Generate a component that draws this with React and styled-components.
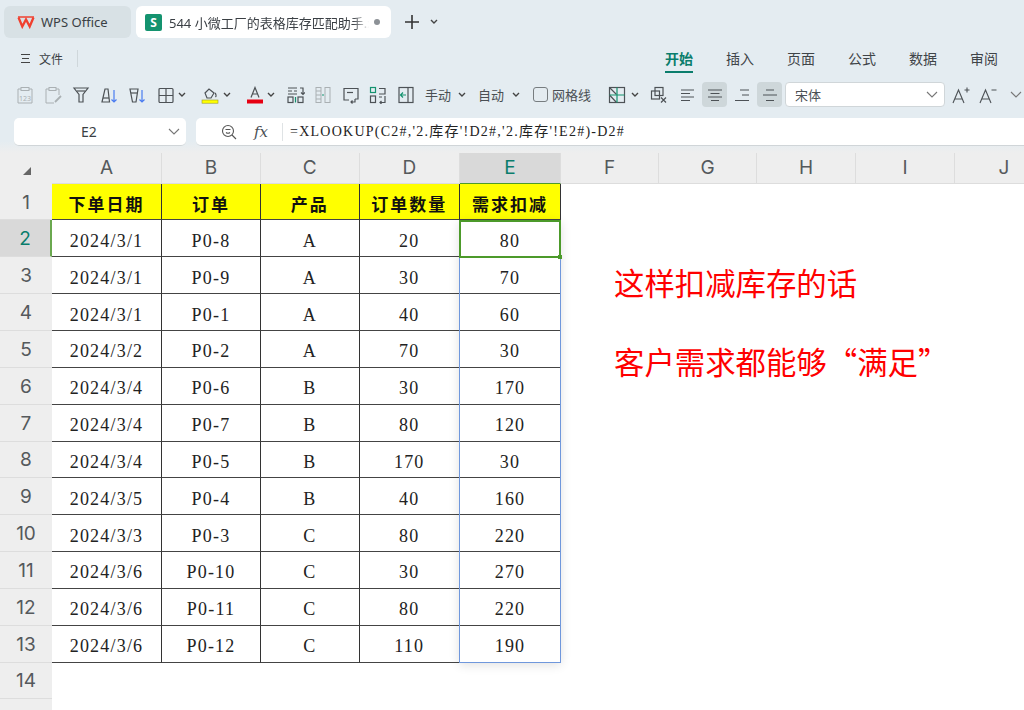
import React from "react";
import styled, { createGlobalStyle } from "styled-components";

const GlobalStyle = createGlobalStyle`
  html, body { margin: 0; padding: 0; background: #fff; }
  body { font-family: "Noto Sans", "Noto Sans CJK SC", sans-serif; overflow: hidden; }
  * { box-sizing: border-box; }
`;

const Page = styled.div`
  width: 1024px;
  height: 710px;
  overflow: hidden;
  display: flex;
  flex-direction: column;
  background: #fff;
`;

const Chrome = styled.div`
  height: 153px;
  flex: none;
  background: #e4ecf1;
  display: flex;
  flex-direction: column;
`;

const TabBar = styled.div`
  height: 38px;
  padding: 6px 0 0 4px;
  display: flex;
  align-items: stretch;
  gap: 5px;
`;

const Tab = styled.div`
  width: ${(p) => p.$w}px;
  background: ${(p) => (p.$active ? "#fff" : "#d8e1e5")};
  border-radius: 6px;
  display: flex;
  align-items: center;
  gap: ${(p) => (p.$active ? 7 : 6)}px;
  padding-left: ${(p) => (p.$active ? 9 : 13)}px;
  font-size: 13px;
  color: #3a3f44;
  white-space: nowrap;
  overflow: hidden;
`;

const TabTitle = styled.span`
  width: 200px;
  overflow: hidden;
  mask-image: linear-gradient(to right, #000 92%, transparent);
`;

const Dot = styled.span`
  width: 6px;
  height: 6px;
  margin-left: -2px;
  border-radius: 50%;
  background: #8c9196;
`;

const NewTab = styled.div`
  display: flex;
  align-items: center;
  gap: 10px;
  margin-left: 8px;
`;

const MenuRow = styled.div`
  height: 38px;
  display: flex;
  align-items: flex-start;
  justify-content: space-between;
  padding: 7px 26px 0 20px;
`;

const FileMenu = styled.div`
  height: 27px;
  display: flex;
  align-items: center;
  gap: 8px;
  font-size: 12px;
  color: #3a3f44;
`;

const Divider = styled.span`
  width: 1px;
  height: 17px;
  margin-left: 6px;
  background: #cfd7db;
`;

const Ribbon = styled.div`
  display: flex;
  gap: 33px;
`;

const RibbonTab = styled.div`
  height: 28px;
  width: 28px;
  padding-top: 4px;
  font-size: 14px;
  line-height: 20px;
  text-align: center;
  white-space: nowrap;
  color: ${(p) => (p.$active ? "#0a7d6c" : "#3f4448")};
  font-weight: ${(p) => (p.$active ? 700 : 400)};
  border-bottom: 2px solid ${(p) => (p.$active ? "#0a7d6c" : "transparent")};
`;

const Toolbar = styled.div`
  height: 37px;
  padding: 6px 0 0 11px;
  display: flex;
  align-items: flex-start;
`;

const ToolButton = styled.div`
  height: 25px;
  width: ${(p) => p.$w || 28}px;
  flex: none;
  display: flex;
  align-items: center;
  justify-content: ${(p) => (p.$pl === undefined ? "center" : "flex-start")};
  padding-left: ${(p) => p.$pl || 0}px;
  gap: ${(p) => p.$gap || 4}px;
  border-radius: 4px;
  font-size: 13px;
  color: #4a4f54;
  background: ${(p) => (p.$on ? "#ced7da" : "transparent")};
  white-space: nowrap;
`;

const CheckBox = styled.span`
  width: 15px;
  height: 15px;
  border: 1px solid #777d80;
  border-radius: 3px;
`;

const FontSelect = styled.div`
  width: 160px;
  height: 25px;
  margin: 0 2px 0 3px;
  flex: none;
  background: #fff;
  border: 1px solid #d0d6d9;
  border-radius: 4px;
  padding: 0 6px 0 9px;
  font-size: 13px;
  color: #4a4f54;
  display: flex;
  align-items: center;
  justify-content: space-between;
`;

const FormulaRow = styled.div`
  height: 40px;
  display: flex;
  padding: 5px 0 0 14px;
  gap: 10px;
  background: linear-gradient(#e4ecf1 70%, #eeeeee);
`;

const NameBox = styled.div`
  width: 172px;
  height: 28px;
  background: #fff;
  border-radius: 5px;
  border-bottom: 1px solid #d0d5d8;
  font-size: 14px;
  color: #3a3f44;
  display: flex;
  align-items: center;
  justify-content: space-between;
  padding: 0 6px 0 67px;
`;

const FormulaBox = styled.div`
  flex: 1;
  height: 28px;
  background: #fff;
  border-radius: 5px 0 0 5px;
  border-bottom: 1px solid #d0d5d8;
  display: flex;
  align-items: center;
  padding-left: 25px;
`;

const FxLabel = styled.span`
  margin-left: 17px;
  font-family: "DejaVu Serif", serif;
  font-style: italic;
  font-size: 15px;
  color: #4a4f54;
`;

const FormulaText = styled.span`
  margin-left: 14px;
  padding-left: 7px;
  border-left: 1px solid #dfe3e5;
  font-family: "Liberation Serif", "Noto Sans CJK SC", serif;
  font-size: 14px;
  letter-spacing: 1.25px;
  line-height: 18px;
  color: #222;
  white-space: nowrap;
`;

const Sheet = styled.div`
  flex: 1;
  display: grid;
  grid-template-columns: 52px 110px 99px 98.5px 100.5px 101px 98px 98px 99px 99px 99px;
  grid-template-rows: 30.6px repeat(15, 36.85px);
  position: relative;
`;

const Corner = styled.div`
  background: #eeeeee;
  position: relative;
  &::after {
    content: "";
    position: absolute;
    left: 23px;
    bottom: 9px;
    border-style: solid;
    border-width: 0 0 8px 8px;
    border-color: transparent transparent #666 transparent;
  }
`;

const ColHead = styled.div`
  background: ${(p) => (p.$sel ? "#d9d9d9" : "#eeeeee")};
  color: ${(p) => (p.$sel ? "#0a7d6c" : "#55595c")};
  border-right: 1px solid #dddddd;
  border-bottom: ${(p) => (p.$sel ? "1px solid #4c9a2a" : "1px solid #dddddd")};
  font-size: 19px;
  display: flex;
  align-items: center;
  justify-content: center;
  font-family: "Inter", "Noto Sans", sans-serif;
`;

const RowHead = styled.div`
  grid-column: 1;
  background: ${(p) => (p.$sel ? "#d9d9d9" : "#eeeeee")};
  color: ${(p) => (p.$sel ? "#0a7d6c" : "#55595c")};
  border-bottom: 1px solid #dddddd;
  border-right: ${(p) => (p.$sel ? "2px solid #6aa84f" : "none")};
  padding-top: 1px;
  font-size: 19px;
  display: flex;
  align-items: center;
  justify-content: center;
  font-family: "Inter", "Noto Sans", sans-serif;
`;

const Cell = styled.div`
  display: flex;
  align-items: center;
  justify-content: center;
  padding-top: ${(p) => (p.$head ? 3 : 6)}px;
  font-family: "Liberation Serif", "Noto Sans CJK SC", serif;
  font-size: ${(p) => (p.$head ? 17 : 18)}px;
  font-weight: ${(p) => (p.$head ? 700 : 400)};
  letter-spacing: ${(p) => (p.$head ? "2px" : "1.2px")};
  color: ${(p) => (p.$head ? "#111" : "#222")};
  background: ${(p) => (p.$head ? "#ffff00" : "#fff")};
  border-right: 1px solid #333;
  border-bottom: 1px solid #444;
`;

const SelectedRange = styled.div`
  position: absolute;
  left: 459px;
  top: 67px;
  width: 102px;
  height: 443px;
  border: 1px solid #6f97dc;
  box-shadow: 0 2px 10px rgba(0, 0, 0, 0.12);
  pointer-events: none;
`;

const ActiveCell = styled.div`
  position: absolute;
  left: 459px;
  top: 67px;
  width: 102px;
  height: 38px;
  border: 2px solid #4c9a2a;
  pointer-events: none;
  &::after {
    content: "";
    position: absolute;
    right: -3px;
    bottom: -3px;
    width: 4px;
    height: 4px;
    background: #4c9a2a;
  }
`;

const Note = styled.div`
  position: absolute;
  left: 614px;
  top: ${(p) => p.$top}px;
  font-family: "Noto Sans CJK SC", sans-serif;
  font-size: 30.4px;
  line-height: 40px;
  color: #ff0000;
  white-space: nowrap;
`;

const Svg = ({ children, sw = 1.2, stroke = "#4d5256" }) => (
  <svg width="18" height="18" viewBox="0 0 18 18" fill="none" stroke={stroke} strokeWidth={sw}>
    {children}
  </svg>
);

const Caret = ({ color = "#444" }) => (
  <svg width="8" height="6" viewBox="0 0 8 6" fill="none" stroke={color} strokeWidth="1.4">
    <path d="M1 1l3 3 3-3" />
  </svg>
);

const Chevron = () => (
  <svg width="12" height="8" viewBox="0 0 12 8" fill="none" stroke="#777" strokeWidth="1.1">
    <path d="M1 1l5 5 5-5" />
  </svg>
);

const rows = [
  ["2024/3/1", "P0-8", "A", "20", "80"],
  ["2024/3/1", "P0-9", "A", "30", "70"],
  ["2024/3/1", "P0-1", "A", "40", "60"],
  ["2024/3/2", "P0-2", "A", "70", "30"],
  ["2024/3/4", "P0-6", "B", "30", "170"],
  ["2024/3/4", "P0-7", "B", "80", "120"],
  ["2024/3/4", "P0-5", "B", "170", "30"],
  ["2024/3/5", "P0-4", "B", "40", "160"],
  ["2024/3/3", "P0-3", "C", "80", "220"],
  ["2024/3/6", "P0-10", "C", "30", "270"],
  ["2024/3/6", "P0-11", "C", "80", "220"],
  ["2024/3/6", "P0-12", "C", "110", "190"],
];

const heads = ["下单日期", "订单", "产品", "订单数量", "需求扣减"];
const cols = ["A", "B", "C", "D", "E", "F", "G", "H", "I", "J"];
const tabs = ["开始", "插入", "页面", "公式", "数据", "审阅"];
const GREEN = "#14936f";
const BLUE = "#4a7cf0";
const FADED = "#aab0b3";

export default function App() {
  return (
    <Page>
      <GlobalStyle />
      <Chrome>
        <TabBar>
          <Tab $w={127}>
            <svg width="18" height="14" viewBox="0 0 18 14" fill="none" stroke="#f0402f" strokeWidth="2.3">
              <path d="M1.5 2.5l3.8 9 3.7-7 3.7 7 3.8-9" />
              <path d="M1 2h16" strokeWidth="1.6" />
            </svg>
            WPS Office
          </Tab>
          <Tab $w={255} $active>
            <svg width="17" height="17" viewBox="0 0 17 17">
              <rect width="17" height="17" rx="2" fill={GREEN} />
              <text x="8.5" y="13" fontSize="12" fontWeight="700" fill="#fff" textAnchor="middle">S</text>
            </svg>
            <TabTitle>544 小微工厂的表格库存匹配助手.xlsx</TabTitle>
            <Dot />
          </Tab>
          <NewTab>
            <svg width="16" height="16" viewBox="0 0 16 16" stroke="#333" strokeWidth="1.6">
              <path d="M8 1v14M1 8h14" />
            </svg>
            <Caret />
          </NewTab>
        </TabBar>
        <MenuRow>
          <FileMenu>
            <svg width="11" height="11" viewBox="0 0 11 11" stroke="#444" strokeWidth="1.1">
              <path d="M1 1.5h9M2 5.5h7M1 9.5h9" />
            </svg>
            文件
            <Divider />
          </FileMenu>
          <Ribbon>
            {tabs.map((t, i) => (
              <RibbonTab key={t} $active={i === 0}>{t}</RibbonTab>
            ))}
          </Ribbon>
        </MenuRow>
        <Toolbar>
          <ToolButton>
            <Svg stroke={FADED} sw={1}>
              <path d="M5 3H2v14h14V3h-3" />
              <rect x="5" y="1.5" width="8" height="3" />
              <text x="9" y="14.5" fontSize="7" textAnchor="middle" stroke="none" fill={FADED}>123</text>
            </Svg>
          </ToolButton>
          <ToolButton>
            <Svg stroke={FADED} sw={1}>
              <path d="M5 3H2v14h8M12 3h3v6" />
              <rect x="5" y="1.5" width="7" height="3" />
              <path d="M11 16l6-6" strokeWidth="1.8" />
            </Svg>
          </ToolButton>
          <ToolButton>
            <Svg><path d="M2 2h14l-5 6.5V16H7V8.5z" /><path d="M5 5h8" /></Svg>
          </ToolButton>
          <ToolButton>
            <Svg><path d="M5 3h3l1.5 13H2z" /><path d="M3 12h6" /><path d="M14 4v12M11.5 13.5L14 16l2.5-2.5" stroke={BLUE} /></Svg>
          </ToolButton>
          <ToolButton>
            <Svg><path d="M2 3h8L8 16H4.5z" /><path d="M3 7h6" /><path d="M14 4v12M11.5 13.5L14 16l2.5-2.5" stroke={BLUE} /></Svg>
          </ToolButton>
          <ToolButton $w={45} $pl={6} $gap={3}>
            <Svg><rect x="2" y="2.5" width="14" height="14" rx="1" /><path d="M9 2.5v14M2 9.5h14" /></Svg>
            <Caret />
          </ToolButton>
          <ToolButton $w={45} $pl={5}>
            <Svg>
              <path d="M4 7l4-4 5 4-3 5H6z" />
              <path d="M14 7c1 1 1.500 3 .5 4" />
              <rect x="1" y="14" width="16" height="3.200" fill="#ffff00" stroke="#9a9a2a" strokeWidth="0.6" />
            </Svg>
            <Caret />
          </ToolButton>
          <ToolButton $w={41} $pl={5} $gap={3}>
            <Svg>
              <path d="M5 11.500L9 1.500l4 10M6.500 8h5" />
              <rect x="1" y="13.500" width="16" height="4" fill="#e60012" stroke="none" />
            </Svg>
            <Caret />
          </ToolButton>
          <ToolButton $w={27.5}>
            <Svg>
              <path d="M1 2h9M1 5h4M7 5h3M1 8h9M13 2h3v6M14 6.500l2 2 2-2" />
              <rect x="1" y="11" width="5" height="5.500" />
              <rect x="11" y="11" width="5" height="5.500" />
              <path d="M8.500 11v5.500" stroke={GREEN} />
            </Svg>
          </ToolButton>
          <ToolButton $w={27.5}>
            <Svg stroke={FADED} sw={1}>
              <rect x="2" y="1.500" width="5" height="15" />
              <path d="M2 5h5M2 9h5M2 13h5" />
              <rect x="11" y="1.500" width="5" height="15" />
              <path d="M8 9h2" stroke={GREEN} />
            </Svg>
          </ToolButton>
          <ToolButton $w={27.5}>
            <Svg><path d="M7 14H2V2.500h14V13h-3" /><path d="M5 6.500h6" /><path d="M13 13v3H9M10.500 14.500L9 16l1.500 1.500" /></Svg>
          </ToolButton>
          <ToolButton $w={27.5}>
            <Svg>
              <rect x="1.500" y="1.500" width="5" height="5" stroke={GREEN} />
              <rect x="1.500" y="10" width="5" height="6.500" />
              <path d="M10 2.500h6V8h-6M10 11h3M16 10v6.500h-5M12.500 15L11 16.500l1.500 1.500" />
            </Svg>
          </ToolButton>
          <ToolButton $w={27.5}>
            <Svg><rect x="2" y="1.500" width="14" height="15" /><path d="M11 1.500v15" /><path d="M9 9H4M6 6.500L3.500 9 6 11.500" stroke={GREEN} /></Svg>
          </ToolButton>
          <ToolButton $w={52.5} $pl={5.5} $gap={7}>手动 <Caret /></ToolButton>
          <ToolButton $w={55} $pl={6} $gap={8}>自动 <Caret /></ToolButton>
          <ToolButton $w={77} $pl={6}><CheckBox />网格线</ToolButton>
          <ToolButton $w={41} $pl={4} $gap={5}>
            <Svg>
              <rect x="1.500" y="1.500" width="15" height="15" />
              <path d="M1.500 1.500l7 7M1.500 9l7 7.500" />
              <path d="M9 1.500v15M1.500 9h15" stroke={GREEN} />
            </Svg>
            <Caret />
          </ToolButton>
          <ToolButton>
            <Svg><rect x="5" y="1.500" width="8" height="8" /><rect x="1.500" y="5" width="8" height="8" /><path d="M11 11.500l5 5M16 11.500l-5 5" /></Svg>
          </ToolButton>
          <ToolButton $w={29}>
            <Svg sw={1}><path d="M2 4h13M2 7.500h9M2 11h13M2 14.500h9" /></Svg>
          </ToolButton>
          <ToolButton $w={25} $on>
            <Svg sw={1}><path d="M2 4h14M4.500 7.500h9M2 11h14M5 14.500h8" /></Svg>
          </ToolButton>
          <ToolButton $w={30}>
            <Svg sw={1}><path d="M7 4h9M9 9h7M2 14.500h14" /></Svg>
          </ToolButton>
          <ToolButton $w={25} $on>
            <Svg sw={1}><path d="M5 4h8M2 9h14M5 14.500h8" /></Svg>
          </ToolButton>
          <FontSelect>宋体 <Chevron /></FontSelect>
          <ToolButton>
            <Svg sw={1.1}><path d="M1 17L6.500 4 12 17M3 13h7M12.500 4h5M15 1.500v5" /></Svg>
          </ToolButton>
          <ToolButton $w={25}>
            <Svg sw={1.1}><path d="M1 17L6.500 4 12 17M3 13h7M12.500 4h5" /></Svg>
          </ToolButton>
          <ToolButton $w={32}><Chevron /></ToolButton>
        </Toolbar>
        <FormulaRow>
          <NameBox>E2 <Chevron /></NameBox>
          <FormulaBox>
            <svg width="16" height="16" viewBox="0 0 16 16" fill="none" stroke="#555" strokeWidth="1.1">
              <circle cx="7" cy="7" r="5.500" />
              <path d="M11 11l4 4M4.500 5.500h5M5 8.500c1 .8 3 .8 4 0" />
            </svg>
            <FxLabel>fx</FxLabel>
            <FormulaText>=XLOOKUP(C2#,'2.库存'!D2#,'2.库存'!E2#)-D2#</FormulaText>
          </FormulaBox>
        </FormulaRow>
      </Chrome>
      <Sheet>
        <Corner />
        {cols.map((c) => (
          <ColHead key={c} $sel={c === "E"}>{c}</ColHead>
        ))}
        <RowHead>1</RowHead>
        {heads.map((h) => (
          <Cell key={h} $head>{h}</Cell>
        ))}
        {rows.map((r, i) => (
          <React.Fragment key={i}>
            <RowHead $sel={i === 0}>{i + 2}</RowHead>
            {r.map((v, j) => (
              <Cell key={j}>{v}</Cell>
            ))}
          </React.Fragment>
        ))}
        <RowHead>14</RowHead>
        <RowHead>15</RowHead>
        <SelectedRange />
        <ActiveCell />
        <Note $top={109}>这样扣减库存的话</Note>
        <Note $top={188}>客户需求都能够“满足”</Note>
      </Sheet>
    </Page>
  );
}
